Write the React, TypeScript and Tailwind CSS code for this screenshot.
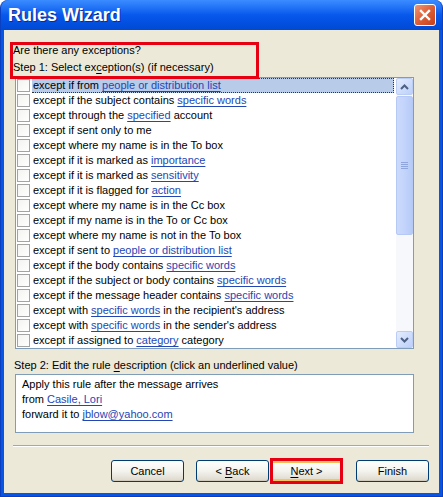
import React from "react";

const rows = [
  "except if from {people or distribution list}",
  "except if the subject contains {specific words}",
  "except through the {specified} account",
  "except if sent only to me",
  "except where my name is in the To box",
  "except if it is marked as {importance}",
  "except if it is marked as {sensitivity}",
  "except if it is flagged for {action}",
  "except where my name is in the Cc box",
  "except if my name is in the To or Cc box",
  "except where my name is not in the To box",
  "except if sent to {people or distribution list}",
  "except if the body contains {specific words}",
  "except if the subject or body contains {specific words}",
  "except if the message header contains {specific words}",
  "except with {specific words} in the recipient's address",
  "except with {specific words} in the sender's address",
  "except if assigned to {category} category",
];

function Label({ text }: { text: string }) {
  // odd parts are the underlined values
  const parts = text.split(/[{}]/);
  return (
    <>
      {parts.map((p, i) =>
        i % 2 === 1 ? (
          <span key={i} className="text-[#2446b4] underline underline-offset-[2px]">
            {p}
          </span>
        ) : (
          <span key={i}>{p}</span>
        )
      )}
    </>
  );
}

function Chevron({ down }: { down?: boolean }) {
  return (
    <svg width="9" height="6" viewBox="0 0 9 6" className={down ? "rotate-180" : ""}>
      <path d="M1 5 L4.5 1.5 L8 5" fill="none" stroke="#4d6185" strokeWidth="2" />
    </svg>
  );
}

function ScrollButton({ down }: { down?: boolean }) {
  return (
    <div className="flex h-[17px] w-[17px] items-center justify-center rounded-[2px] border border-[#bccdf5] bg-gradient-to-br from-[#e4ecfe] to-[#bcd0fa]">
      <Chevron down={down} />
    </div>
  );
}

function XpButton({ children, hot }: { children: React.ReactNode; hot?: boolean }) {
  return (
    <button
      type="button"
      className={
        "flex h-[22px] w-[73px] items-center justify-center rounded-[3px] border border-[#003c74] bg-gradient-to-b from-[#ffffff] via-[#f4f3ee] to-[#dcd8cc] text-[11px] text-black " +
        (hot ? "shadow-[inset_0_0_0_2px_#f9c25b]" : "shadow-[inset_0_-1px_0_#d0cbbd]")
      }
    >
      {children}
    </button>
  );
}

export default function App() {
  return (
    <div
      className="h-[497px] w-[443px] bg-white"
      style={{ fontFamily: '"Liberation Sans", Arial, sans-serif' }}
    >
      <div className="flex h-full w-full flex-col rounded-t-[8px] border border-t-0 border-[#0a3fbf] bg-[#0755e6]">
        {/* title bar */}
        <div className="flex h-[30px] items-center rounded-t-[8px] bg-gradient-to-b from-[#3b8cff] via-[#0758ec] to-[#0049d4] pl-[7px] pr-[6px]">
          <span className="text-[18px] font-bold leading-none text-white [text-shadow:1px_1px_0_#0b2b96]">
            Rules Wizard
          </span>
          <div className="ml-auto flex h-[22px] w-[22px] items-center justify-center rounded-[3px] border border-white bg-gradient-to-br from-[#ee9574] via-[#dd5e36] to-[#c63f1b]">
            <svg width="12" height="12" viewBox="0 0 12 12">
              <path d="M2 2 L10 10 M10 2 L2 10" stroke="white" strokeWidth="2.4" strokeLinecap="square" />
            </svg>
          </div>
        </div>

        {/* client area */}
        <div className="relative mx-[3px] mb-[3px] flex flex-1 flex-col bg-[#ece9d8] pl-[11px] text-[11px] text-black">
          <div className="ml-[-2px] pt-[12px] leading-[17px]">
            <div>Are there any exceptions?</div>
            <div>
              Step 1: Select ex<u className="underline-offset-[2px]">c</u>eption(s) (if necessary)
            </div>
          </div>

          {/* exceptions list */}
          <div className="mt-[1px] flex h-[272px] w-[399px] border border-[#7f9db9] bg-white">
            <div className="flex-1 overflow-hidden">
              {rows.map((r, i) => (
                <div key={i} className="flex h-[15px] items-center">
                  <span className="ml-[1px] h-[13px] w-[13px] shrink-0 border border-[#a3a3a3] bg-gradient-to-br from-[#f3f3f0] to-white" />
                  <span
                    className={
                      "ml-[2px] mr-[2px] block h-[15px] flex-1 whitespace-pre pl-[1px] " +
                      (i === 0
                        ? "border border-dotted border-l-0 border-[#333] bg-[#b8cbe9] leading-[13px]"
                        : "leading-[15px]")
                    }
                  >
                    <Label text={r} />
                  </span>
                </div>
              ))}
            </div>
            <div className="flex w-[17px] flex-col bg-[#f7f8fc]">
              <ScrollButton />
              <div className="mt-[1px] flex h-[139px] w-[17px] flex-col items-center justify-center gap-[1px] rounded-[2px] border border-[#b5c9f4] bg-gradient-to-r from-[#cbdafc] via-[#c3d4fb] to-[#b6cbf8]">
                <span className="h-[1px] w-[7px] bg-[#8ea6dc]" />
                <span className="h-[1px] w-[7px] bg-[#8ea6dc]" />
                <span className="h-[1px] w-[7px] bg-[#8ea6dc]" />
                <span className="h-[1px] w-[7px] bg-[#8ea6dc]" />
              </div>
              <div className="flex-1" />
              <ScrollButton down />
            </div>
          </div>

          <div className="ml-[-1px] mt-[9px] leading-[15px]">
            Step 2: Edit the rule <u className="underline-offset-[2px]">d</u>escription (click an underlined value)
          </div>

          {/* description box */}
          <div className="mt-[1px] h-[59px] w-[399px] border border-[#7f9db9] bg-white pl-[6px] pt-[2px] leading-[15px]">
            <div>Apply this rule after the message arrives</div>
            <div className="whitespace-pre">
              from <Label text="{Casile, Lori}" />
            </div>
            <div className="whitespace-pre">
              forward it to <Label text="{jblow@yahoo.com}" />
            </div>
          </div>

          <div className="ml-[-2px] mt-[12px] w-[416px] border-t border-b border-t-[#aca899] border-b-white" />

          {/* buttons */}
          <div className="mt-[13px] flex pl-[96px]">
            <XpButton>Cancel</XpButton>
            <div className="ml-[12px]">
              <XpButton>
                &lt; <u className="ml-[3px] underline-offset-[2px]">B</u>ack
              </XpButton>
            </div>
            <div className="relative ml-[1px]">
              <XpButton hot>
                <u className="underline-offset-[2px]">N</u>ext &gt;
              </XpButton>
              <div className="absolute -top-[2px] -bottom-[2px] left-0 right-0 border-[3px] border-[#e60012]" />
            </div>
            <div className="ml-[13px]">
              <XpButton>Finish</XpButton>
            </div>
          </div>

          {/* annotation box around step 1 */}
          <div className="absolute left-[6px] top-[12px] h-[37px] w-[249px] border-[3px] border-[#e60012]" />
        </div>
      </div>
    </div>
  );
}
